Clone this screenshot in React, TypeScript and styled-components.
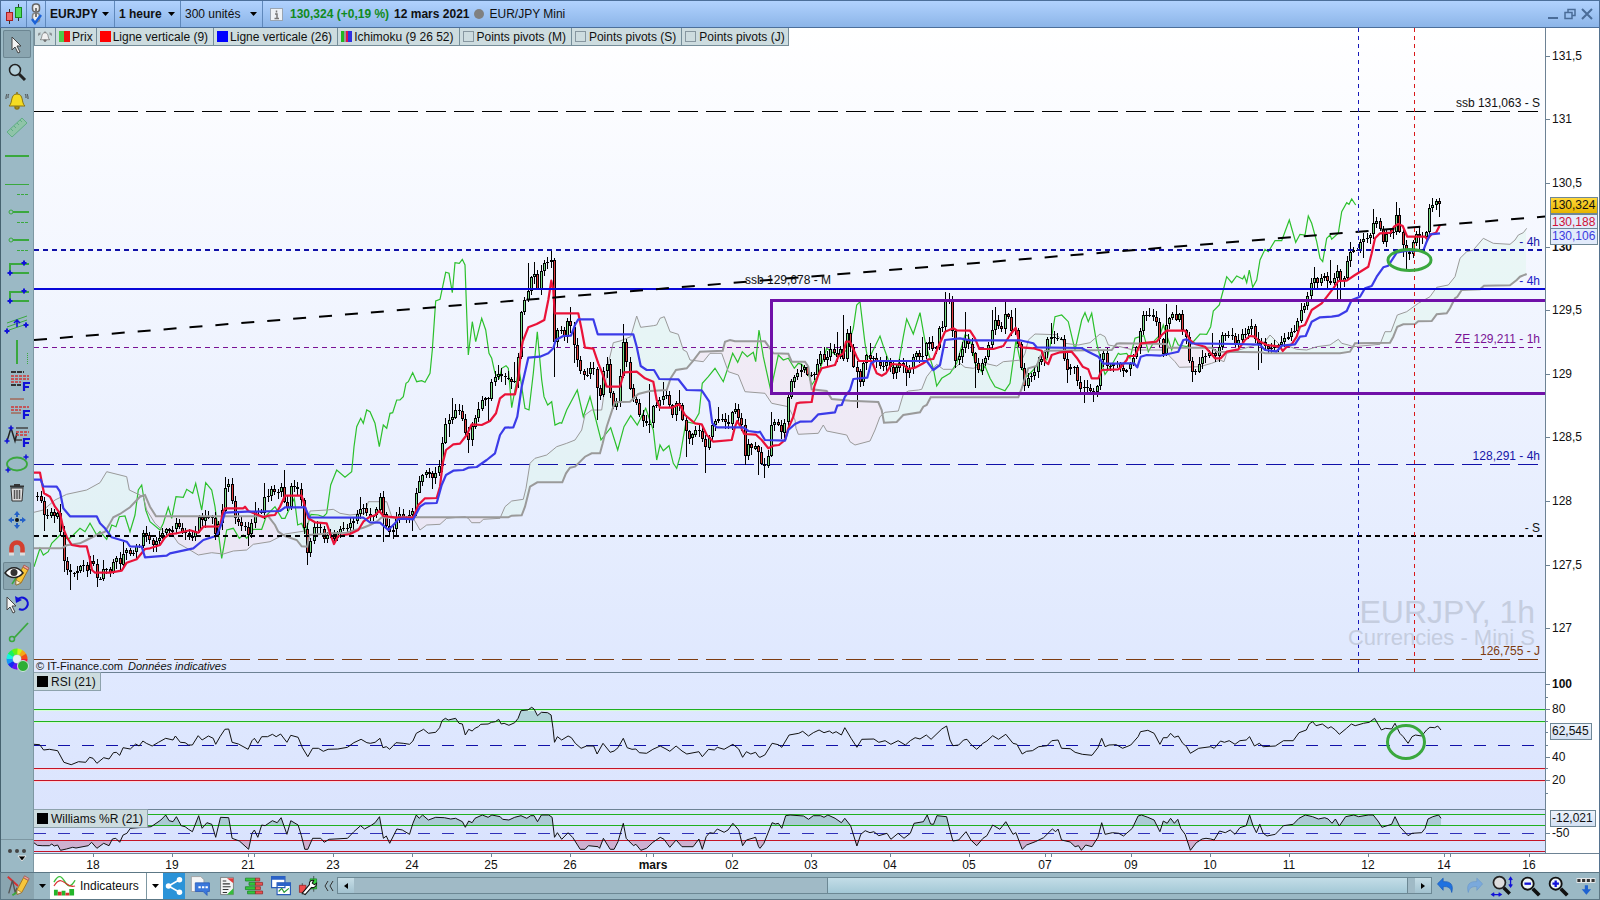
import React from 'react';
import styled, { createGlobalStyle, css } from 'styled-components';

/* ---------- series data ---------- */

type Pt = [number, number];

// Sections of a series are stored on a finer grid and mapped to plot units here.
const trace = (ox: number, oy: number, text: string, sx = 3): Pt[] =>
  text.trim().split(/\s+/).map((p) => {
    const [x, y] = p.split(',').map(Number);
    return [ox + x / sx, oy + y / 3] as Pt;
  });

const A: Pt = [-4, 372];
const B: Pt = [366, 212];
const C: Pt = [726, 232];
const D: Pt = [1086, 152];

const series = (a: string, b: string, c: string, d: string): Pt[] => [
  ...trace(A[0], A[1], a), ...trace(B[0], B[1], b), ...trace(C[0], C[1], c), ...trace(D[0], D[1], d),
];

const tenkan = series(
  '12,218 30,218 36,250 42,280 60,290 75,320 90,340 100,385 110,410 125,435 150,439 170,439 178,470 186,510 195,518 240,518 275,512 290,488 320,478 345,447 360,445 390,435 405,412 420,402 440,400 480,391 505,398 520,380 570,379 578,340 585,325 640,325 645,320 655,333 685,345 700,352 715,347 735,345 750,320 765,287 815,287 825,320 835,355 855,367 890,370 900,400 912,432 925,408 960,402 985,390 1000,365 1020,350 1035,346 1048,333 1060,348 1100,353',
  '10,833 40,833 55,795 75,775 110,774 120,740 128,670 138,630 160,613 180,611 200,585 215,553 245,555 270,543 288,520 300,475 315,463 345,463 355,420 362,340 368,305 385,262 410,252 433,240 445,180 454,122 460,150 464,220 535,220 545,270 555,323 580,326 595,370 607,400 620,440 660,440 672,397 710,395 735,415 760,425 770,480 780,503 815,503 838,493 855,525 885,550 905,553 920,585 940,605 995,600 1005,560 1012,543 1027,570 1033,582 1068,584 1085,600 1105,625 1120,617 1137,615 1155,600 1165,565 1180,530 1190,490',
  '120,428 155,426 163,380 175,345 185,325 225,315 235,290 250,280 258,245 270,245 290,290 297,303 335,303 350,340 365,347 378,340 395,312 430,315 445,327 465,323 490,310 505,298 520,297 535,260 555,215 580,205 590,211 630,212 645,235 658,267 700,267 730,258 750,225 767,203 780,255 785,262 820,265 845,272 855,305 865,312 875,285 900,277 935,275 950,293 968,320 985,328 995,355 1015,355 1025,330 1075,328',
  '0,565 20,540 25,528 45,528 62,490 110,485 125,465 140,452 195,452 210,480 225,492 255,500 272,520 285,535 302,535 320,515 355,508 375,480 390,468 405,470 415,482 440,495 480,500 488,513 500,500 515,493 530,470 540,440 555,435 575,390 605,370 640,325 655,303 680,302 705,285 745,260 755,220 765,175 780,160 812,158 822,140 835,132 848,138 862,170 915,170 922,178 935,162 948,158 960,135',
);

const kijun = series(
  '12,239 32,239 40,259 80,260 90,275 100,325 120,349 200,349 210,370 225,385 245,412 290,425 300,439 335,440 345,472 410,467 420,460 490,445 520,420 560,407 575,370 585,338 650,335 750,333 765,322 825,322 838,352 1000,353 1020,367 1050,368 1075,390 1095,370 1105,357',
  '10,836 40,838 60,800 75,790 110,789 125,735 138,705 160,692 190,690 205,683 230,681 260,660 285,640 300,585 315,563 340,562 352,530 365,440 385,353 420,350 445,340 460,325 467,300 490,288 513,287 525,255 535,238 580,238 593,283 700,283 710,320 722,378 740,390 762,390 778,417 835,418 860,450 905,451 928,485 937,550 950,562 1030,562 1045,573 1075,577',
  '0,515 15,540 75,542 85,510 105,492 120,485 155,484 175,463 225,457 232,437 245,435 255,410 270,390 280,357 322,353 333,310 345,303 500,303 520,330 540,315 555,240 600,235 630,241 780,241 820,250 830,262 965,264 985,275 1015,290 1030,311 1075,311',
  '0,550 42,550 52,562 62,530 80,525 120,527 175,515 190,480 200,478 215,490 350,492 420,494 435,510 470,514 485,497 525,493 540,470 557,468 575,425 600,412 635,410 655,407 680,393 695,360 720,350 735,325 755,318 770,290 790,262 805,257 830,218 860,212 910,212 920,185 930,163 960,160',
);

const spanB = series(
  '12,445 95,445 110,436 150,430 170,420 200,405 225,395 240,370 250,352 270,342 300,322 330,290 345,285 360,320 378,349 715,349 735,375 745,395 765,408 800,420 815,439 832,440 838,405 900,400 950,398 975,390 1000,383 1020,375 1040,365 1055,352 1100,353',
  '0,832 325,832 335,827 365,826 375,800 390,740 412,727 487,727 498,700 510,683 525,680 555,650 575,640 600,640 608,610 620,560 640,500 645,487 690,485 715,462 750,453 800,450 812,415 828,390 860,385 880,362 900,335 968,332 975,305 990,300 1005,304 1095,304 1110,325 1120,340 1165,341 1175,365 1195,365',
  '135,305 145,320 155,388 200,393 215,417 270,422 355,426 365,450 372,488 410,486 430,465 480,457 490,440 500,435 512,412 775,412 785,385 805,325 830,318 840,290 855,272 1055,270 1070,251',
  '0,490 140,492 145,503 275,503 290,515 425,517 435,520 660,520 690,515 705,490 810,488 820,470 832,440 850,433 885,432 895,424 935,423 950,403 980,400 990,385 1005,355 1012,350 1025,330 1080,328 1092,317 1170,316 1190,300 1200,290 1220,282',
);

const spanA = series(
  '12,337 40,330 75,300 110,283 170,270 210,248 230,215 290,230 298,270 340,290 350,330 375,370 400,393 430,408 445,430 480,450 505,465 545,458 580,462 610,453 650,450 670,433 720,425 765,402 830,392 840,333 890,330 910,328 930,340 960,345 1005,340 1015,305 1070,305 1085,350 1110,353',
  '10,833 40,835 60,870 80,855 120,853 140,835 195,830 205,835 215,848 240,848 250,838 300,835 315,800 335,783 370,778 378,745 390,670 405,655 440,645 470,620 500,610 525,600 545,570 555,525 575,510 605,510 615,440 625,370 640,308 660,303 692,290 710,228 722,262 760,257 770,255 780,235 793,230 810,275 835,283 850,330 860,335 870,360 910,365 930,340 965,340 985,395 1015,405 1035,455 1095,460 1115,490 1165,500 1185,540',
  '108,505 115,523 175,520 190,495 200,513 260,525 270,545 285,555 330,543 345,510 360,470 375,457 415,453 430,403 445,393 475,390 485,388 500,350 520,325 530,313 550,328 580,328 600,310 615,322 640,325 680,311 710,318 730,305 785,300 795,280 805,240 825,222 890,224 915,250 955,255 990,248 1005,235 1020,222 1035,230 1045,255 1075,260',
  '0,500 40,510 135,510 150,530 165,545 178,562 240,560 275,550 300,540 312,545 320,520 340,515 400,497 415,490 435,485 450,465 465,480 480,495 510,500 530,508 560,510 590,500 630,495 640,488 655,478 665,490 685,495 700,500 780,493 795,455 813,455 832,405 860,395 895,370 930,350 950,322 985,315 1005,290 1020,235 1040,215 1060,210 1090,175 1120,190 1170,193 1185,180 1195,165 1210,158 1220,145',
);

const chikou = series(
  '12,500 30,445 40,465 55,455 65,430 90,405 115,418 130,405 150,385 165,395 180,370 200,405 210,395 230,418 245,375 258,380 268,350 285,348 300,395 315,345 325,270 335,255 347,330 360,365 390,390 400,370 415,322 425,355 438,290 460,292 470,268 488,280 497,250 515,330 527,248 545,270 555,320 575,475 590,390 610,385 628,415 640,405 650,415 670,388 695,388 710,345 735,320 755,355 765,355 793,295 803,375 815,370 825,398 843,343 865,345 880,350 890,340 902,255 920,210 945,232 965,215 972,140 980,80 992,55 1000,70 1010,30 1020,35 1035,70 1048,140 1060,75 1070,85 1080,40 1088,38 1100,0',
  '0,480 10,470 18,430 25,425 38,398 50,425 65,422 75,427 90,400 97,330 107,183 120,178 137,97 147,100 157,158 165,68 178,70 187,58 195,75 200,220 205,345 217,245 227,305 245,235 257,270 267,340 275,355 285,400 298,415 305,385 318,377 325,385 335,503 357,385 365,440 375,505 387,510 400,400 412,275 425,420 432,470 443,495 455,485 465,555 480,548 485,550 500,510 532,450 550,530 570,470 603,600 632,563 653,630 672,560 692,527 712,555 737,505 760,570 770,660 780,615 790,632 807,617 820,670 830,685 840,650 858,545 880,550 897,520 907,430 925,410 945,385 970,425 985,380 998,340 1013,367 1027,335 1042,350 1060,337 1067,365 1077,270 1090,350 1113,455 1120,415 1135,345 1150,360 1165,355 1183,385 1195,370',
  '125,313 145,340 155,375 165,360 175,345 200,265 235,290 260,270 280,205 290,135 300,125 315,250 322,290 330,290 360,228 372,265 385,300 400,320 405,325 415,315 430,230 440,177 460,222 480,158 497,255 520,325 530,378 545,355 570,340 590,310 615,225 625,228 635,255 645,310 665,335 675,318 690,355 705,380 735,392 750,370 768,240 785,325 800,350 820,330 840,300 860,300 870,260 885,170 905,165 925,185 945,270 965,180 975,158 985,185 995,160 1010,250 1025,310 1035,343 1055,315 1075,280',
  '0,523 20,520 30,535 45,475 60,470 72,467 85,515 105,480 120,465 130,435 155,510 165,475 175,495 200,500 220,485 240,462 260,463 272,440 280,393 298,375 310,330 320,290 335,308 350,288 368,297 373,287 380,308 388,270 398,322 410,300 420,240 435,208 445,215 465,182 485,182 508,120 527,187 540,163 555,165 565,108 575,130 590,185 600,235 608,245 620,175 630,165 635,178 655,160 665,95 680,68 687,73 695,57 707,75',
);

const closes = series(
  '22,290 32,298 42,345 52,352 62,340 72,350 82,340 92,400 101,487 110,508 121,520 130,520 140,515 148,500 160,497 170,510 180,485 190,490 200,538 210,536 222,505 240,520 250,483 262,475 272,500 280,455 290,452 303,465 315,440 328,438 338,402 350,405 362,435 372,435 390,410 405,385 420,395 430,392 438,365 450,395 465,400 485,418 495,400 505,350 515,365 530,345 545,350 557,410 570,345 578,325 585,258 600,250 608,350 625,372 650,385 657,420 668,345 680,320 690,362 700,285 715,295 725,262 740,290 750,250 762,300 775,330 783,250 805,270 815,315 825,425 835,475 845,400 855,378 870,385 882,420 895,400 912,415 930,385 950,385 968,365 985,335 995,315 1010,345 1035,350 1048,285 1060,355 1075,395 1085,400 1100,345 1115,345 1130,355 1142,345',
  '40,815 50,735 62,715 78,690 95,712 110,700 122,660 130,560 142,540 155,535 165,510 178,512 190,545 202,615 212,565 230,517 245,475 265,480 275,425 295,400 320,420 345,425 355,340 365,190 375,180 387,135 400,92 415,155 425,70 440,60 455,65 463,345 475,240 490,300 503,240 515,270 525,340 543,400 558,412 573,378 585,390 595,500 605,425 615,365 625,375 632,500 645,510 655,440 663,380 672,270 682,410 695,470 710,490 722,545 735,550 748,550 760,490 772,495 785,465 800,460 815,535 830,480 840,500 850,555 862,595 875,585 890,565 905,590 912,630 925,590 935,560 950,530 970,545 985,555 1000,500 1015,530 1025,560 1032,660 1042,615 1055,625 1070,610 1080,670 1092,685 1105,640 1115,540 1135,555 1148,590 1158,500 1170,430 1185,405 1195,400',
  '120,338 130,320 145,350 155,345 165,345 178,280 195,305 210,270 230,290 240,265 250,305 258,210 270,260 280,320 290,330 296,390 305,325 315,283 330,295 345,290 355,320 370,320 385,300 395,348 415,310 430,320 440,345 455,310 462,265 475,290 490,285 500,230 512,262 525,270 535,205 548,200 555,125 568,120 578,230 585,300 600,285 610,250 620,228 630,265 642,305 655,335 668,305 680,280 690,235 700,175 712,190 722,220 735,160 748,170 757,240 765,200 775,260 782,320 792,380 805,350 820,340 835,300 850,290 862,240 875,230 888,245 900,230 912,300 925,335 940,315 950,360 962,385 975,380 990,390 1000,395 1015,370 1025,240 1035,310 1050,320 1075,310',
  '5,580 20,565 35,548 45,520 55,485 63,410 80,405 95,410 108,425 118,480 128,520 138,430 155,400 165,420 178,400 188,460 200,480 205,530 212,580 225,575 240,540 260,525 275,515 290,530 300,470 320,465 335,465 348,500 360,465 380,455 392,430 405,480 415,490 428,480 440,510 455,505 470,500 490,480 510,460 525,455 540,395 555,380 567,330 578,290 592,305 610,290 635,310 650,270 665,320 680,245 695,205 710,212 725,180 745,178 755,140 768,120 780,150 790,190 805,150 815,170 828,105 845,185 855,205 865,240 875,190 888,165 905,175 918,155 925,95 935,70 942,72 949,55 958,76',
);

// Turning points whose wick runs well past the candle body.
const extremes = series(
  '40,392 92,313 101,515 121,570 200,560 222,480 280,425 345,378 438,355 585,230 603,235 657,438 675,305 700,250 763,210 793,240 835,495 990,290 1048,280 1060,425 1148,390',
  '38,872 58,760 97,748 145,592 160,475 205,640 265,545 295,375 345,365 387,70 402,65 454,30 463,412 513,200 525,370 595,540 615,350 672,253 748,433 748,578 790,425 835,450 860,650 917,700 960,500 1005,488 1030,675 1077,705 1097,715 1115,515',
  '15,655 232,215 250,165 293,443 325,250 440,378 487,230 560,97 568,98 590,325 620,155 650,383 697,150 707,140 737,125 767,145 790,392 875,190 925,370 973,428 1005,425',
  '5,590 90,385 118,500 142,373 172,375 220,607 272,460 390,420 397,418 410,570 427,548 440,520 578,262 635,240 648,365 665,367 695,185 733,235 763,88 832,65 850,230 862,270 900,210 963,110',
);

const at = (pts: Pt[], x: number): number => {
  if (x <= pts[0][0]) return pts[0][1];
  for (let i = 1; i < pts.length; i++) {
    if (pts[i][0] >= x) {
      const [x0, y0] = pts[i - 1];
      const [x1, y1] = pts[i];
      return x1 === x0 ? y1 : y0 + ((y1 - y0) * (x - x0)) / (x1 - x0);
    }
  }
  return pts[pts.length - 1][1];
};

const toPath = (pts: Pt[]) => pts.map((p, i) => `${i ? 'L' : 'M'}${p[0].toFixed(1)} ${p[1].toFixed(1)}`).join('');

const noise = (n: number) => {
  const v = Math.sin(n * 127.1 + 31.7) * 43758.5453;
  return v - Math.floor(v);
};

interface Candle { x: number; open: number; close: number; high: number; low: number }

const STEP = 3.29;
const candles: Candle[] = [];
{
  let prev = at(closes, 3) - 1;
  for (let i = 0; i <= 426; i++) {
    const x = 3.4 + i * STEP;
    const close = at(closes, x) + (noise(i) - 0.5) * 3;
    const top = Math.min(prev, close);
    const bottom = Math.max(prev, close);
    candles.push({ x: Math.round(x), open: prev, close, high: top - 1 - noise(i + 900) * 6, low: bottom + 1 + noise(i + 400) * 6 });
    prev = close;
  }
  extremes.forEach(([x, y]) => {
    const c = candles[Math.max(0, Math.min(candles.length - 1, Math.round((x - 3.4) / STEP)))];
    if (y < (c.open + c.close) / 2) c.high = y;
    else c.low = y;
  });
}

// The cloud is split in runs, one for each side that leads.
const cloud: { bull: boolean; d: string }[] = [];
{
  let run: number[] = [];
  let bull = true;
  const flush = () => {
    if (run.length > 1) {
      const upper = run.map((x) => [x, at(spanA, x)] as Pt);
      const lower = run.slice().reverse().map((x) => [x, at(spanB, x)] as Pt);
      cloud.push({ bull, d: toPath([...upper, ...lower]) + 'Z' });
    }
    run = [];
  };
  for (let x = 0; x <= 1492; x += 1) {
    const b = at(spanA, x) <= at(spanB, x);
    if (b !== bull) { flush(); bull = b; }
    run.push(x);
  }
  flush();
}

const RX = 2.063;
const rsi: Pt[] = [
  ...trace(-4, 8, '8,193 20,194 28,210 40,208 57,212 70,247 85,254 100,245 115,247 123,232 130,235 138,250 152,233 163,237 172,218 178,217 185,226 192,203 207,207 218,192 225,198 233,183 240,190 252,198 265,187 280,175 295,180 300,168 310,187 320,188 327,195 335,195 347,167 355,180 368,168 378,175 383,193 392,170 402,148 410,147 417,187 430,192 450,208 458,182 463,175 470,190 478,170 490,170 500,163 508,170 517,162 530,187 538,166 553,172 562,203 573,230 583,205 595,205 605,214 615,208 635,207 655,202 668,188 683,178 695,188 702,190 712,187 722,175 728,203 735,200 742,208 755,188 770,190 783,193 790,183 797,160 812,148 822,160 837,157 845,143 850,122 857,115 863,120 878,115 885,130 892,132 898,165 905,148 912,153 918,145 925,140 930,133 945,132 952,127 960,125 967,118 972,132 978,130 988,136 1000,128 1007,115 1013,92 1027,90 1035,82 1040,87 1047,107 1055,97 1068,98 1075,105 1079,145 1082,187 1088,170 1097,180 1110,168 1117,173 1125,190 1137,205 1148,198 1163,198 1170,222 1182,190 1197,217 1205,213 1213,203 1224,175 1232,203 1242,208 1250,207 1257,218 1272,220 1285,208 1300,198 1312,207 1320,214 1333,198 1345,213 1355,222 1380,215 1387,230 1400,208 1412,210 1418,202 1432,208 1450,193 1462,207 1470,232 1478,215 1487,222 1497,217 1503,230', RX),
  ...trace(726, 8, '0,232 10,225 25,190 38,194 45,202 60,165 80,160 88,154 100,168 110,158 122,150 132,158 143,153 150,160 157,155 168,165 175,143 188,175 200,202 210,178 235,177 245,187 258,182 270,193 285,182 300,195 310,182 320,173 330,177 343,165 353,178 375,147 385,138 392,180 398,197 410,195 420,180 427,178 435,193 447,208 460,190 468,183 480,167 492,178 507,163 522,190 530,193 541,222 550,214 562,212 575,200 592,197 602,182 615,180 622,205 640,206 650,217 665,223 685,226 697,203 705,175 712,200 720,195 735,194 748,205 765,195 780,170 785,155 800,151 813,160 825,193 832,173 840,173 847,160 855,172 863,168 872,190 880,200 888,220 905,205 930,200 937,205 950,183 958,187 968,182 980,193 990,182 1003,180 1010,170 1020,198 1030,190 1038,200 1063,198 1080,182 1100,182 1112,158 1127,150 1133,132 1140,125 1147,137 1160,132 1172,145 1178,140 1187,150 1195,163 1210,145 1220,132 1228,137 1245,130 1257,127 1268,115 1282,150 1290,145 1303,147 1310,130 1320,160 1327,170 1337,190 1345,170 1352,165 1365,168 1375,150 1382,142 1392,143 1398,138 1405,150', RX),
];
const williams: Pt[] = [
  ...trace(-4, -129, '8,488 15,496 25,497 40,497 45,492 50,498 57,495 63,511 75,507 88,502 95,504 120,497 127,487 138,505 152,490 163,497 170,477 177,475 185,487 192,465 200,460 207,445 250,440 262,428 270,420 280,405 287,422 295,425 302,410 312,437 320,440 327,448 335,455 348,407 355,445 365,428 375,433 383,472 393,412 410,413 417,475 432,483 451,508 458,460 463,450 470,472 478,435 485,437 500,422 510,428 518,413 530,463 538,422 553,435 560,467 567,508 573,508 583,475 600,475 607,487 617,478 655,475 668,455 682,437 690,447 705,435 712,428 721,410 729,475 735,468 742,490 757,447 768,450 783,463 790,430 797,405 803,415 810,405 822,420 837,412 855,413 868,417 878,415 892,425 898,442 905,423 912,428 918,415 933,405 945,412 953,405 970,410 975,418 988,420 1000,412 1013,407 1025,415 1033,407 1040,407 1047,425 1055,405 1070,405 1077,412 1082,472 1088,458 1097,478 1110,458 1120,473 1135,508 1145,508 1152,497 1172,500 1175,505 1183,475 1197,508 1205,508 1213,485 1224,430 1230,475 1245,497 1250,493 1260,511 1272,505 1285,487 1300,472 1308,478 1320,502 1333,480 1345,500 1368,500 1380,477 1387,508 1395,470 1402,458 1410,460 1418,447 1432,457 1440,450 1450,430 1462,450 1470,497 1478,480 1497,472 1503,500', RX),
  ...trace(726, -129, '0,505 8,490 25,428 32,432 38,430 45,445 53,407 62,405 90,408 100,418 110,407 125,407 132,412 140,405 155,415 168,428 175,415 187,437 200,498 208,463 217,452 227,458 235,455 245,467 262,460 270,478 285,460 297,475 310,460 318,430 337,425 345,405 352,432 358,433 365,407 385,410 390,440 398,483 410,480 425,455 435,480 447,497 460,475 468,467 480,435 495,448 507,425 522,463 528,458 541,508 550,495 568,485 585,473 603,447 610,455 615,447 622,480 640,486 650,500 657,497 663,511 672,495 685,500 697,472 705,428 712,463 727,458 740,460 750,468 768,445 780,408 787,405 800,412 813,420 825,455 832,423 840,430 847,415 855,430 862,418 868,445 877,463 888,511 900,488 912,477 920,475 930,477 937,480 948,453 960,458 970,450 980,463 990,443 1003,437 1010,405 1017,437 1024,458 1031,433 1038,460 1046,468 1063,463 1080,437 1100,433 1112,415 1125,405 1140,410 1152,417 1165,413 1172,417 1180,430 1187,417 1195,438 1208,410 1225,405 1235,410 1255,405 1265,405 1275,423 1283,442 1303,433 1310,410 1320,440 1337,467 1345,460 1365,458 1372,445 1378,417 1388,410 1400,405 1405,415', RX),
];

const area = (pts: Pt[], level: number) =>
  `${toPath(pts)}L${pts[pts.length - 1][0]} ${level}L${pts[0][0]} ${level}Z`;

/* ---------- styled parts ---------- */

const Global = createGlobalStyle`
  * { box-sizing: border-box; }
  body { margin: 0; background: #fff; }
  button, select, input { font: inherit; color: inherit; }
`;

const Window = styled.div`
  display: flex;
  flex-direction: column;
  min-height: 100vh;
  font: 12px/16px 'Liberation Sans', Arial, sans-serif;
  color: #101010;
  background: #fff;
`;

const TitleBar = styled.header`
  display: flex;
  align-items: stretch;
  height: 28px;
  border: 1px solid #4c6f9a;
  background: linear-gradient(#b1d2fe, #8cb5e8);
`;

const TitleIcon = styled.button<{ $w: number }>`
  display: flex;
  align-items: center;
  justify-content: center;
  width: ${(p) => p.$w}px;
  padding: 0;
  border: 0;
  border-right: 1px solid #5f88bb;
  background: none;
`;

const Picker = styled.label<{ $w: number; $bold?: boolean }>`
  display: flex;
  align-items: center;
  justify-content: space-between;
  width: ${(p) => p.$w}px;
  padding: 0 5px 0 4px;
  border-right: 1px solid #5f88bb;
  font-weight: ${(p) => (p.$bold ? 700 : 400)};
  select {
    appearance: none;
    padding: 0;
    border: 0;
    background: none;
  }
`;

const Quote = styled.div`
  display: flex;
  flex: 1;
  align-items: center;
  gap: 5px;
  padding-left: 7px;
  strong { white-space: nowrap; }
`;
const Change = styled.strong`
  padding-left: 2px;
  color: #108a20;
`;
const Dot = styled.span`
  width: 10px;
  height: 10px;
  border-radius: 50%;
  background: #808080;
`;

const WindowButtons = styled.div`
  display: flex;
  align-items: center;
  gap: 5px;
  padding-right: 6px;
  button { display: flex; padding: 0; border: 0; background: none; }
`;

const Body = styled.div`
  display: flex;
  flex: 1;
`;

const ToolColumn = styled.nav`
  display: flex;
  flex-direction: column;
  align-items: center;
  width: 34px;
  padding: 2px 0 0;
  border-left: 1px solid #46626f;
  border-right: 1px solid #7d97a2;
  background: #9bb9c5;
`;

const Tool = styled.button<{ $active?: boolean }>`
  width: 28px;
  height: 28px;
  padding: 0;
  border: 0;
  border-radius: 2px;
  background: none;
  svg { display: block; }
  ${(p) => p.$active && css`
    background: #8aa5b0;
    box-shadow: inset 0 0 0 1px #6c8692;
  `}
`;

const MoreTool = styled.button`
  width: 100%;
  height: 33px;
  margin-top: auto;
  padding: 0;
  border: 0;
  border-top: 1px solid #7d97a2;
  background: none;
`;

const Charts = styled.main`
  display: flex;
  flex: 1;
  flex-direction: column;
  min-width: 0;
  border-right: 1px solid #55728f;
`;

const Panel = styled.section<{ $grow: number; $from: string; $to: string }>`
  display: flex;
  flex: ${(p) => p.$grow} 1 0;
  min-height: ${(p) => Math.min(p.$grow, 120)}px;
  background: linear-gradient(${(p) => p.$from}, ${(p) => p.$to});
`;

const Plot = styled.div`
  position: relative;
  flex: 1;
  min-width: 0;
`;

const Drawing = styled.svg`
  position: absolute;
  inset: 0;
  width: 100%;
  height: 100%;
`;

const Scale = styled.div`
  position: relative;
  width: 54px;
  border-left: 1px solid #6d8294;
  background: #fff;
`;

const ScaleText = styled.span<{ $y: number; $bold?: boolean }>`
  position: absolute;
  left: 6px;
  top: calc(${(p) => p.$y}% - 8px);
  font-weight: ${(p) => (p.$bold ? 700 : 400)};
  &::before {
    content: '';
    position: absolute;
    left: -6px;
    top: 8px;
    width: 4px;
    height: 1px;
    background: #6d8294;
  }
`;

const MinorTick = styled.i<{ $y: number }>`
  position: absolute;
  left: 0;
  top: ${(p) => p.$y}%;
  width: 2px;
  height: 1px;
  background: #6d8294;
`;

const PriceTag = styled.span<{ $y: number; $kind?: 'last' | 'red' | 'blue' }>`
  position: absolute;
  left: 4px;
  top: calc(${(p) => p.$y}% - 8px);
  padding: 0 2px 0 1px;
  border: 1px solid #6f8796;
  line-height: 15px;
  color: ${(p) => (p.$kind === 'red' ? '#d01238' : p.$kind === 'blue' ? '#3b3be0' : '#101010')};
  background: ${(p) => (p.$kind === 'last' ? 'linear-gradient(#ffd83a, #e6b400)' : p.$kind ? '#e2ebfb' : 'linear-gradient(#eef4fc, #d3e0f2)')};
`;

const Legend = styled.div`
  position: relative;
  display: inline-flex;
  height: 18px;
  border-bottom: 1px solid #758d99;
  border-left: 1px solid #758d99;
`;

const Chip = styled.label<{ $tight?: boolean }>`
  display: flex;
  align-items: center;
  gap: 2px;
  padding: 0 ${(p) => (p.$tight ? 3 : 5)}px 0 3px;
  border-right: 1px solid #758d99;
  white-space: nowrap;
  background: #cddcdf;
`;

const Swatch = styled.span<{ $bg: string }>`
  width: 11px;
  height: 11px;
  background: ${(p) => p.$bg};
`;

const Tick = styled.input`
  appearance: none;
  width: 11px;
  height: 11px;
  margin: 0 1px 0 0;
  border: 1px solid #8797a0;
`;

const PanelName = styled.h2`
  position: relative;
  display: inline-flex;
  align-items: center;
  gap: 3px;
  height: 19px;
  margin: 0;
  padding: 0 4px 0 3px;
  border: 1px solid #8da2ac;
  border-left: 0;
  font-size: 12px;
  font-weight: 400;
  vertical-align: top;
  background: #cddcdf;
`;

const LineLabel = styled.span<{ $y: number; $x?: number; $color?: string }>`
  position: absolute;
  top: calc(${(p) => p.$y}% - 8px);
  ${(p) => (p.$x === undefined ? 'right: 5px;' : `left: ${p.$x}%;`)}
  color: ${(p) => p.$color ?? '#101010'};
  white-space: nowrap;
`;

const Watermark = styled.div`
  position: absolute;
  right: 10px;
  bottom: 22px;
  text-align: right;
  color: #c5cddf;
  font-size: 22px;
  line-height: 24px;
  b { display: block; font-size: 32px; font-weight: 400; line-height: 28px; }
`;

const Credit = styled.div`
  position: absolute;
  left: 2px;
  bottom: -2px;
  font-size: 11px;
  em { margin-left: 2px; }
`;

const DateRow = styled.div`
  display: flex;
  height: 19px;
  border-top: 1px solid #6d8294;
  background: #fff;
`;
const DateTrack = styled.div`
  position: relative;
  flex: 1;
  margin-right: 54px;
`;
const DateText = styled.span<{ $x: number; $bold?: boolean }>`
  position: absolute;
  left: calc(${(p) => p.$x}% - 20px);
  top: 3px;
  width: 40px;
  text-align: center;
  font-weight: ${(p) => (p.$bold ? 700 : 400)};
`;
const DateTick = styled.i<{ $x: number }>`
  position: absolute;
  left: ${(p) => p.$x}%;
  top: 0;
  width: 1px;
  height: 3px;
  background: #6d8294;
`;

const BottomBar = styled.footer`
  display: flex;
  align-items: stretch;
  height: 28px;
  border: 1px solid #5c7785;
  background: #9bb9c5;
`;

const BarButton = styled.button<{ $w: number; $bg?: string }>`
  display: flex;
  flex: none;
  align-items: center;
  justify-content: center;
  gap: 4px;
  width: ${(p) => p.$w}px;
  padding: 0;
  border: 0;
  background: ${(p) => p.$bg ?? 'none'};
`;

const LabelledButton = styled(BarButton)`
  justify-content: flex-start;
  padding-left: 3px;
  border-right: 1px solid #7d97a2;
`;

const Scroller = styled.div`
  display: flex;
  flex: 1;
  margin: 4px 0 5px;
  border: 1px solid #6c8894;
  background: #a0bac6;
  button {
    display: flex;
    align-items: center;
    justify-content: center;
    width: 16px;
    padding: 0;
    border: 0;
    background: linear-gradient(#c6dde6, #a2c2d0);
  }
`;
const ScrollGap = styled.div<{ $grow: number }>`flex: ${(p) => p.$grow};`;
const ScrollThumb = styled.div`
  flex: 580;
  border: solid #6c8894;
  border-width: 0 1px;
  background: linear-gradient(#c3dde7, #a3c8d6);
`;

/* ---------- icons ---------- */

const Ico = ({ s = 28, children }: { s?: number; children: React.ReactNode }) => (
  <svg width={s} height={s} viewBox="0 0 28 28" fill="none" aria-hidden="true">{children}</svg>
);

const Caret = () => (
  <svg width="7" height="4" viewBox="0 0 7 4" aria-hidden="true"><path d="M0 0h7L3.500 4z" fill="#000" /></svg>
);

const G = '#3aa83e';
const N = '#1111d8';
const plus = (x: number, y: number) => `M${x - 2.5} ${y}h5M${x} ${y - 2.5}v5`;

const Arrow = ({ x = 9, y = 7 }: { x?: number; y?: number }) => (
  <path transform={`translate(${x} ${y})`} d="M0 0v13l3-3 3 6 2-1-3-6h4z" fill="#f4f4f4" stroke="#444" strokeWidth="1" />
);
const Pencil = () => (
  <>
    <path d="M13 18 20 5l5 3-7 13-5 2z" fill="#f7c63c" stroke="#a8751b" />
    <path d="m20 5 5 3 1-2-5-3z" fill="#f3a39a" stroke="#a86055" />
    <path d="m13 18 5 3-5 2z" fill="#fff0cf" stroke="#8b6a3a" strokeWidth=".7" />
  </>
);
const FMark = () => (
  <path d="M21 25v-8h6M21 21h5" stroke={N} strokeWidth="2.200" />
);
const Bell = ({ fill, line }: { fill: string; line: string }) => (
  <>
    <path d="M6 20c4-3 1-12 8-12s4 9 8 12z" fill={fill} stroke={line} />
    <path d="M12 21a2 2 0 0 0 4 0zM14 8V6" fill={fill} stroke={line} strokeWidth="1.500" />
    <path d="M4 8c-1 2-1 3-1 5M6 8c-1 1-1 2-1 4M24 8c1 2 1 3 1 5M22 8c1 1 1 2 1 4" stroke="#444" />
  </>
);

const tools: { name: string; active?: boolean; art: React.ReactNode }[] = [
  { name: 'Curseur', active: true, art: <Arrow /> },
  { name: 'Zoom', art: <><circle cx="12" cy="12" r="5.500" fill="#b5d0da" stroke="#222" strokeWidth="1.500" /><path d="m16 16 6 6" stroke="#222" strokeWidth="3" /></> },
  { name: 'Alerte', art: <Bell fill="#f5dc22" line="#8c7410" /> },
  { name: 'Règle', art: <><path d="m4 18 15-14 5 5L9 23z" fill="#8fc4a8" stroke="#5fae84" /><path d="m8 15 2 2m1-5 2 2m1-5 2 2m1-5 2 2" stroke="#5fae84" /></> },
  { name: 'Ligne épaisse', art: <path d="M2 14h24" stroke={G} strokeWidth="2" /> },
  { name: 'Ligne', art: <path d="M2 14.500h24M14 24.500h3m1 0h3m1 0h3" stroke={G} /> },
  { name: 'Demi-droite', art: <><path d="M10 14h16" stroke={G} strokeWidth="2" /><circle cx="8" cy="14" r="2" stroke={G} /><path d="M14 24.500h3m1 0h3m1 0h3" stroke={G} /></> },
  { name: 'Segment', art: <><path d="M10 14h16" stroke={G} strokeWidth="2" /><circle cx="8" cy="14" r="2" stroke={G} /><path d="M14 24.500h3m1 0h3m1 0h3" stroke={G} /></> },
  { name: 'Rectangle', art: <><path d="M26 10H7v9h19" stroke={G} strokeWidth="2" /><path d={plus(21, 9) + plus(7, 19)} stroke={N} strokeWidth="2" /></> },
  { name: 'Rectangle étendu', art: <><path d="M26 10H7v9h19" stroke={G} strokeWidth="2" /><path d={plus(21, 9) + plus(7, 19)} stroke={N} strokeWidth="2" /></> },
  { name: 'Canal', art: <><path d="m4 13 20-7M4 17l20-7M6 20l18-6" stroke={G} /><path d={plus(4, 21) + plus(23, 15)} stroke={N} strokeWidth="2" /><path d="M14 17v-6m-3 2 3-3 3 3" stroke={N} strokeWidth="1.500" /></> },
  { name: 'Ligne verticale', art: <><path d="M14 2v24" stroke={G} strokeWidth="2" /><path d="M24.500 15v11" stroke={G} strokeDasharray="1 1" /></> },
  { name: 'Fibonacci', art: <><path d="M8 6h13M8 19h10" stroke="#333" strokeWidth="2" strokeDasharray="5 1" /><path d="M8 10h18M8 13h18M8 16h10" stroke="#d03535" strokeWidth="1.500" strokeDasharray="3 1" /><FMark /></> },
  { name: 'Extension Fibonacci', art: <><path d="M7 5h14M8 19h10" stroke="#a36a5a" strokeWidth="1.500" /><path d="M8 13h18M8 16h10" stroke="#d03535" strokeWidth="1.500" strokeDasharray="3 1" /><FMark /></> },
  { name: 'Projection Fibonacci', art: <><path d="m4 19 4-13 4 13 2-8" stroke="#222" strokeWidth="1.500" /><path d={plus(8, 6) + plus(4, 19)} stroke={N} strokeWidth="1.500" /><path d="M13 6h12M13 18h6" stroke="#444" strokeWidth="1.500" /><path d="M13 10h13M13 13h11" stroke="#d03535" strokeWidth="1.500" strokeDasharray="3 1" /><FMark /></> },
  { name: 'Ellipse', art: <><ellipse cx="14" cy="14" rx="10" ry="6.500" stroke={G} strokeWidth="1.800" /><path d={plus(23, 7) + plus(5, 20)} stroke={N} strokeWidth="1.500" /></> },
  { name: 'Supprimer', art: <><path d="m8 10 1 13h10l1-13z" fill="#ddd" stroke="#333" /><path d="M7 8.500h14M11 7h6" stroke="#333" strokeWidth="2" /><path d="M11.500 12v9m2.500-9v9m2.500-9v9" stroke="#555" strokeWidth="1.500" /></> },
  { name: 'Déplacer', art: <><path d="m14 5 3 4h-6zM14 23l3-4h-6zM5 14l4-3v6zM23 14l-4-3v6z" fill="#2360c8" /><path d="M14 8v3m0 6v3M8 14h3m6 0h3" stroke="#2360c8" strokeWidth="2" /><circle cx="14" cy="14" r="2" fill="#111" /></> },
  { name: 'Aimant', art: <><path d="M8.500 21v-7a5.500 5.500 0 0 1 11 0v7" stroke="#d3402f" strokeWidth="4.500" /><path d="M6 20h5M17 20h5" stroke="#ddd" strokeWidth="3" /></> },
  { name: 'Afficher les dessins', active: true, art: <><path d="m9 22 4-6 2 7" stroke={G} strokeWidth="1.500" /><Pencil /><path d="M2 11c5-7 13-7 18 0-5 6-13 6-18 0z" fill="#fff" stroke="#222" strokeWidth="1.500" /><circle cx="11" cy="10.500" r="3.500" fill="#333" /></> },
  { name: 'Rétablir curseur', art: <><Arrow x={4} y={7} /><path d="M14 10a6 6 0 1 1 2 9" stroke={N} strokeWidth="2.200" /><path d="m12 6 1 7 6-3z" fill={N} /></> },
  { name: 'Tracer un segment', art: <><path d="M11 20 25 5" stroke={G} strokeWidth="1.800" /><circle cx="9" cy="21" r="2.500" stroke={G} strokeWidth="1.500" /></> },
];

const wheel = ['#c8e024', '#8bdc28', '#27c56a', '#20bfe0', '#246ce8', '#3d28d2', '#246ce8', '#20a0f0', '#20c8e0', '#27c56a', '#ffb01c', '#ffe623'];
const wheelHues = [70, 40, 15, 350, 320, 295, 260, 235, 205, 175, 140, 100];
const Wheel = () => (
  <Ico>
    {wheel.map((_, i) => {
      const p = (a: number) => `${14 + 7.5 * Math.sin(a)} ${13 - 7.5 * Math.cos(a)}`;
      return <path key={i} d={`M${p((i * Math.PI) / 6)}A7.5 7.5 0 0 1 ${p(((i + 1.1) * Math.PI) / 6)}`} stroke={`hsl(${wheelHues[i]} 90% 52%)`} strokeWidth="6" />;
    })}
    <circle cx="14" cy="13" r="4" fill="#e8f0f4" />
    <circle cx="20" cy="20" r="5.500" fill="#2fae35" stroke="#cfe3e3" />
  </Ico>
);

const Lens = ({ sign }: { sign: string }) => (
  <Ico s={26}>
    <circle cx="11.500" cy="11.500" r="6.500" fill="#eef4f6" stroke="#111" strokeWidth="2" />
    <path d="m17 17 7 7" stroke="#111" strokeWidth="4" />
    <path d={sign} stroke={N} strokeWidth="2.500" />
  </Ico>
);

/* ---------- page ---------- */

const H = 644;
const py = (y: number) => (y / H) * 100;
const px = (x: number) => (x / 1511) * 100;

const prices: [string, number, boolean?][] = [
  ['131,5', 28], ['131', 91], ['130,5', 155], ['130', 219, true], ['129,5', 282], ['129', 346],
  ['128,5', 409], ['128', 473], ['127,5', 537], ['127', 600],
];
const dates: [string, number, boolean?][] = [
  ['18', 59], ['19', 138], ['21', 214], ['23', 299], ['24', 378], ['25', 457], ['26', 536], ['mars', 619, true],
  ['02', 698], ['03', 777], ['04', 856], ['05', 935], ['07', 1011], ['09', 1097], ['10', 1176], ['11', 1255],
  ['12', 1334], ['14', 1410], ['16', 1495],
];

const PriceDrawing = () => (
  <Drawing viewBox="0 0 1511 644" preserveAspectRatio="none" fill="none" aria-label="Cours EURJPY">
    {cloud.map((c, i) => <path key={i} d={c.d} fill={c.bull ? '#dcf6ea' : '#f3e0ea'} fillOpacity=".42" />)}
    <path d="M0 83.500H1507" stroke="#000" strokeDasharray="20 8" />
    <path d="M0 436.500H1507" stroke="#1010a8" strokeDasharray="20 8" />
    <path d="M0 631.500H1507" stroke="#7d3c10" strokeDasharray="20 8" />
    <path d="M0 319.500H1507" stroke="#7a1295" strokeDasharray="5 4" />
    <path d={toPath(chikou)} stroke="#2cc02c" strokeWidth="1.200" />
    <path d={toPath(spanA)} stroke="#9a9a9a" />
    {candles.map((c, i) => {
      const top = Math.round(Math.min(c.open, c.close));
      const h = Math.max(1, Math.round(Math.abs(c.open - c.close)));
      return (
        <g key={i}>
          <path d={`M${c.x + 0.5} ${Math.round(c.high)}V${Math.round(c.low)}`} stroke="#000" />
          <rect x={c.x - 1} y={top} width="3" height={h} fill="#000" />
          {h > 2 && <rect x={c.x} y={top + 1} width="1" height={h - 2} fill={c.close < c.open ? '#7fe08a' : '#e04040'} />}
        </g>
      );
    })}
    <path d={toPath(spanB)} stroke="#9a9a9a" strokeWidth="2" />
    <path d={toPath(tenkan)} stroke="#ea1238" strokeWidth="2.200" strokeLinejoin="round" />
    <path d={toPath(kijun)} stroke="#3b3be8" strokeWidth="2.200" strokeLinejoin="round" />
    <path d="M0 222H1511" stroke="#1010a8" strokeWidth="2" strokeDasharray="5 4" />
    <path d="M0 261H1511" stroke="#0808d8" strokeWidth="2" />
    <path d="M0 508H1511" stroke="#000" strokeWidth="2" strokeDasharray="5 4" />
    <path d="M1511 272.500H737.500V365.500H1511" stroke="#7010a8" strokeWidth="3" />
    <path d="M0 312 1511 188.500" stroke="#000" strokeWidth="2" strokeDasharray="13 13" />
    <path d="M1324.500 0V644" stroke="#1818b8" strokeDasharray="4 4" />
    <path d="M1380.500 0V644" stroke="#d81818" strokeDasharray="4 4" />
    <ellipse cx="1375.500" cy="232" rx="21.500" ry="10.500" stroke={G} strokeWidth="3" />
  </Drawing>
);

const RsiDrawing = () => (
  <Drawing viewBox="0 0 1511 137" preserveAspectRatio="none" fill="none" aria-label="RSI">
    <clipPath id="rsi-high"><rect width="1511" height="49" /></clipPath>
    <path d="M0 .5H1511" stroke="#6d8294" />
    <path d={area(rsi, 49)} fill="#2f9a6a" fillOpacity=".25" clipPath="url(#rsi-high)" />
    <path d="M0 38.500H1511M0 50.500H1511" stroke="#d2ffd2" />
    <path d="M0 97.500H1511M0 109.500H1511" stroke="#ffd6dc" />
    <path d="M0 37.500H1511M0 49.500H1511" stroke="#20b020" />
    <path d="M0 96.500H1511M0 108.500H1511" stroke="#c41426" />
    <path d="M0 73.500H1507" stroke="#1010a8" strokeDasharray="12 12" />
    <path d={toPath(rsi)} stroke="#111" />
    <ellipse cx="1372" cy="70" rx="18.500" ry="16.500" stroke={G} strokeWidth="3" />
  </Drawing>
);

const WilliamsDrawing = () => (
  <Drawing viewBox="0 0 1511 44" preserveAspectRatio="none" fill="none" aria-label="Williams">
    <clipPath id="wr-high"><rect width="1511" height="16" /></clipPath>
    <clipPath id="wr-low"><rect y="32" width="1511" height="12" /></clipPath>
    <path d="M0 .5H1511" stroke="#6d8294" />
    <path d={area(williams, 16)} fill="#2f8a6a" fillOpacity=".28" clipPath="url(#wr-high)" />
    <path d={area(williams, 32)} fill="#b03060" fillOpacity=".28" clipPath="url(#wr-low)" />
    <path d="M0 5.500H1511M0 16.500H1511" stroke="#20b020" />
    <path d="M0 31.500H1511M0 42.500H1511" stroke="#c41426" />
    <path d="M0 24.500H1507" stroke="#3030b8" strokeDasharray="12 12" />
    <path d={toPath(williams)} stroke="#111" />
  </Drawing>
);

export default function App() {
  return (
    <Window>
      <Global />
      <TitleBar>
        <TitleIcon $w={26} aria-label="Graphique">
          <svg width="20" height="22" viewBox="0 0 20 22"><path d="M5.500 6v15M14.500 1v17" stroke="#333" /><rect x="2.500" y="9.500" width="6" height="8" fill="#f06a6a" stroke="#a82020" /><rect x="11.500" y="4.500" width="6" height="10" fill="#4fdc58" stroke="#188a20" /></svg>
        </TitleIcon>
        <TitleIcon $w={19} aria-label="Lier">
          <svg width="14" height="22" viewBox="0 0 14 22" fill="none"><rect x="3.500" y="1" width="7" height="8" rx="3" fill="#eee" stroke="#666" strokeWidth="1.500" /><rect x="3.500" y="10" width="7" height="9" rx="3" fill="#eee" stroke="#888" strokeWidth="1.500" /><path d="M7 5v9" stroke="#777" strokeWidth="2" /><path d="m3 16 3 4 6-8" stroke="#1b62d8" strokeWidth="2.500" /></svg>
        </TitleIcon>
        <Picker $w={69} $bold><select aria-label="Instrument"><option>EURJPY</option></select><Caret /></Picker>
        <Picker $w={66} $bold><select aria-label="Période"><option>1 heure</option></select><Caret /></Picker>
        <Picker $w={82}><select aria-label="Unités"><option>300 unités</option></select><Caret /></Picker>
        <Quote>
          <svg width="13" height="13" viewBox="0 0 13 13"><rect x=".5" y=".5" width="12" height="12" fill="#eef2f6" stroke="#9aa5b2" /><path d="M6.500 2.500v2M5 6h2v4.500M4.500 10.500h4.500" stroke="#777" strokeWidth="1.500" fill="none" /></svg>
          <Change>130,324 (+0,19 %)</Change>
          <strong>12 mars 2021</strong>
          <Dot />
          <span>EUR/JPY Mini</span>
        </Quote>
        <WindowButtons>
          <button aria-label="Réduire"><svg width="12" height="12" viewBox="0 0 12 12"><path d="M1 10h10" stroke="#4a6c98" strokeWidth="2" /></svg></button>
          <button aria-label="Restaurer"><svg width="12" height="12" viewBox="0 0 12 12" fill="none"><path d="M4 4V1.500h7v6H8M1 4.500h7v6H1z" stroke="#4a6c98" strokeWidth="1.500" /></svg></button>
          <button aria-label="Fermer"><svg width="12" height="12" viewBox="0 0 12 12"><path d="m1 1 10 10M11 1 1 11" stroke="#4a6c98" strokeWidth="2" /></svg></button>
        </WindowButtons>
      </TitleBar>

      <Body>
        <ToolColumn aria-label="Outils de dessin">
          {tools.map((t) => <Tool key={t.name} $active={t.active} aria-label={t.name}><Ico>{t.art}</Ico></Tool>)}
          <Tool aria-label="Couleurs"><Wheel /></Tool>
          <MoreTool aria-label="Plus d’outils">
            <svg width="22" height="20" viewBox="0 0 22 20"><g fill="#444"><circle cx="4" cy="7" r="2" /><circle cx="11" cy="7" r="2" /><circle cx="18" cy="7" r="2" /></g><path d="M12 12h8l-4 5z" fill="#000" stroke="#fff" strokeWidth=".8" /></svg>
          </MoreTool>
        </ToolColumn>

        <Charts>
          <Panel $grow={644} $from="#ffffff" $to="#dfe8fe">
            <Plot>
              <PriceDrawing />
              <Watermark><b>EURJPY, 1h</b>Currencies - Mini S</Watermark>
              <LineLabel $y={py(75)}>ssb 131,063 - S</LineLabel>
              <LineLabel $y={py(214)} $color="#1515a8">- 4h</LineLabel>
              <LineLabel $y={py(253)} $color="#2020c8">- 4h</LineLabel>
              <LineLabel $y={py(252)} $x={px(711)}>ssb 129,678 - M</LineLabel>
              <LineLabel $y={py(311)} $color="#7a1295">ZE 129,211 - 1h</LineLabel>
              <LineLabel $y={py(428)} $color="#1515a8">128,291 - 4h</LineLabel>
              <LineLabel $y={py(500)}>- S</LineLabel>
              <LineLabel $y={py(623)} $color="#7d3c10">126,755 - J</LineLabel>
              <Credit>© IT-Finance.com <em>Données indicatives</em></Credit>
              <Legend>
                <Chip $tight><svg width="14" height="15" viewBox="2 5 24 19" fill="none"><Bell fill="#f0f0f0" line="#555" /></svg></Chip>
                <Chip $tight><Swatch $bg="linear-gradient(90deg,#4ccb4c 50%,#f01010 50%)" />Prix</Chip>
                <Chip><Swatch $bg="#ff0000" />Ligne verticale (9)</Chip>
                <Chip><Swatch $bg="#0000ff" />Ligne verticale (26)</Chip>
                <Chip><Swatch $bg="linear-gradient(90deg,#20b820 30%,#999 30% 45%,#e01050 45% 65%,#3030e0 65%)" />Ichimoku (9 26 52)</Chip>
                {['M', 'S', 'J'].map((k) => <Chip key={k} $tight={k === 'J'}><Tick type="checkbox" />Points pivots ({k})</Chip>)}
              </Legend>
            </Plot>
            <Scale>
              {prices.map(([t, y, b]) => <ScaleText key={t} $y={py(y)} $bold={b}>{t}</ScaleText>)}
              <PriceTag $y={py(177)} $kind="last">130,324</PriceTag>
              <PriceTag $y={py(194)} $kind="red">130,188</PriceTag>
              <PriceTag $y={py(208)} $kind="blue">130,106</PriceTag>
            </Scale>
          </Panel>

          <Panel $grow={137} $from="#e0e9ff" $to="#dbe4fd">
            <Plot>
              <RsiDrawing />
              <PanelName><Swatch $bg="#000" />RSI (21)</PanelName>
            </Plot>
            <Scale>
              <ScaleText $y={9} $bold>100</ScaleText>
              <ScaleText $y={27}>80</ScaleText>
              <ScaleText $y={62}>40</ScaleText>
              <ScaleText $y={79}>20</ScaleText>
              {[18, 36, 44, 53, 70, 88].map((y) => <MinorTick key={y} $y={y} />)}
              <PriceTag $y={43}>62,545</PriceTag>
            </Scale>
          </Panel>

          <Panel $grow={44} $from="#dce5fe" $to="#d8e2fd">
            <Plot>
              <WilliamsDrawing />
              <PanelName><Swatch $bg="#000" />Williams %R (21)</PanelName>
            </Plot>
            <Scale>
              <ScaleText $y={55}>-50</ScaleText>
              <PriceTag $y={20}>-12,021</PriceTag>
            </Scale>
          </Panel>

          <DateRow>
            <DateTrack>
              {dates.map(([t, x, b]) => <React.Fragment key={t}><DateTick $x={px(x)} /><DateText $x={px(x)} $bold={b}>{t}</DateText></React.Fragment>)}
              {[220, 612, 1017, 1416].map((x) => <DateTick key={x} $x={px(x)} />)}
            </DateTrack>
          </DateRow>
        </Charts>
      </Body>

      <BottomBar>
        <BarButton $w={33} $bg="#8aa5b0" aria-label="Dessiner"><Ico s={26}><path d="M3 4 14 14" stroke="#d83030" strokeWidth="2" /><path d="m4 22 4-14 3 13 2-5" stroke="#555" strokeWidth="1.500" /><path d="m8 24 6-4" stroke={G} strokeWidth="2" /><Pencil /></Ico></BarButton>
        <BarButton $w={16} aria-label="Options de dessin"><Caret /></BarButton>
        <LabelledButton $w={97} $bg="#fff">
          <svg width="23" height="22" viewBox="0 0 24 22" fill="none"><path d="M1 7C6-2 9 1 12 6s6 8 11-1" stroke="#3cbf3c" strokeWidth="1.500" /><path d="M1 11c5-8 8-6 12-3s6 4 10 3" stroke="#d83030" strokeWidth="1.200" /><path d="M1 15h4v6H1zM9 16h4v5H9zM17 14h5v7h-5z" fill="#25b52b" /><path d="M5 17h4v4H5zM13 18h4v3h-4z" fill="#d83030" /></svg>
          Indicateurs
        </LabelledButton>
        <BarButton $w={16} $bg="#fff" aria-label="Choisir un indicateur"><Caret /></BarButton>
        <BarButton $w={22} $bg="#2b93d8" aria-label="Partager"><Ico s={22}><path d="M21 6 7 14l14 8" stroke="#fff" strokeWidth="2" /><g fill="#fff"><circle cx="21" cy="6" r="3.500" /><circle cx="7" cy="14" r="3.500" /><circle cx="21" cy="22" r="3.500" /></g></Ico></BarButton>
        <BarButton $w={29} aria-label="Commentaires"><Ico s={22}><path d="M3 2h12l4 4v15H3z" fill="#f5f5f5" stroke="#999" /><path d="M8 10h18v11h-3v5l-5-5H8z" fill="#3b78dc" stroke="#2a5cb8" /><path d="M12 15.500h3m1.500 0h3m1.500 0h3" stroke="#fff" strokeWidth="2.500" /></Ico></BarButton>
        <BarButton $w={26} aria-label="Carnet"><Ico s={20}><path d="M5 2h18v24H5z" fill="#f4f4f4" stroke="#666" /><path d="M14 3h9v7z" fill="#e03a3a" /><path d="M23 17v9h-9z" fill="#36bd3b" /><path d="M8 7h5M8 11h10M8 15h11M8 19h8M8 23h6" stroke="#333" strokeWidth="1.500" /></Ico></BarButton>
        <BarButton $w={27} aria-label="Profondeur"><Ico s={20}><path d="M2 3h14v4H2zM7 9h9v4H7zM2 15h14v4H2zM5 21h11v4H5z" fill="#32c83a" stroke="#197d20" /><path d="M16 3h6v4h-6zM16 9h10v4H16zM16 15h7v4h-7zM16 21h10v4H16z" fill="#e85252" stroke="#962222" /></Ico></BarButton>
        <BarButton $w={27} aria-label="Copier la fenêtre"><Ico s={22}><path d="M2 2h17v14H2zM9 10h17v15H9z" fill="#fff" stroke="#2a5cb8" strokeWidth="1.500" /><path d="M2 2h17v4H2zM9 10h17v4H9z" fill="#2a62c8" /><path d="m11 21 4-4 3 5 6-5" stroke="#2a9a35" strokeWidth="1.500" /></Ico></BarButton>
        <BarButton $w={27} aria-label="Réglages"><Ico s={20}><path d="M6 10v16M22 0v22" stroke="#333" /><path d="M2 13h9v10H2z" fill="#f04a4a" stroke="#961c1c" /><path d="M17 4h9v14h-9z" fill="#36d23d" stroke="#197d20" /><path d="m6 24 10-12a5 5 0 0 1 6-6l-2 4 3 2 3-2c0 5-4 7-7 6L10 26z" fill="#fff" stroke="#111" strokeWidth="1.500" /></Ico></BarButton>
        <BarButton $w={16} aria-label="Masquer"><svg width="10" height="10" viewBox="0 0 10 10" fill="none"><path d="M4 0 1 5l3 5M9 0 6 5l3 5" stroke="#333" /></svg></BarButton>
        <Scroller role="scrollbar" aria-label="Historique" aria-valuenow={90}>
          <button aria-label="Reculer"><svg width="4" height="6" viewBox="0 0 4 6"><path d="M4 0v6L0 3z" /></svg></button>
          <ScrollGap $grow={473} />
          <ScrollThumb />
          <ScrollGap $grow={7} />
          <button aria-label="Avancer"><svg width="4" height="6" viewBox="0 0 4 6"><path d="M0 0v6l4-3z" /></svg></button>
        </Scroller>
        <BarButton $w={28} aria-label="Annuler"><Ico s={20}><path d="M10 3v5c10-1 15 4 12 15-1-6-5-9-12-8v5L2 11z" fill="#1f72e0" stroke="#1658b8" /></Ico></BarButton>
        <BarButton $w={28} aria-label="Rétablir"><Ico s={20}><path d="M18 3v5C8 7 3 12 6 23c1-6 5-9 12-8v5l8-9z" fill="#7aa9dc" stroke="#6a98cc" /></Ico></BarButton>
        <BarButton $w={28} aria-label="Ajuster"><Ico s={24}><circle cx="11" cy="10" r="7" fill="#ddd" stroke="#222" strokeWidth="2" /><path d="m16 16 7 7" stroke="#111" strokeWidth="4" /><path d="M24 5v9m-2-7 2-3 2 3m-4 5 2 3 2-3M3 24h9m-7-2-3 2 3 2m5-4 3 2-3 2" stroke={N} strokeWidth="1.500" /></Ico></BarButton>
        <BarButton $w={28} aria-label="Dézoomer"><Lens sign="M8 11.500h7" /></BarButton>
        <BarButton $w={28} aria-label="Zoomer"><Lens sign="M8 11.500h7M11.500 8v7" /></BarButton>
        <BarButton $w={27} aria-label="Dernière valeur"><Ico s={22}><path d="M2 4h24v6H2z" fill="#eee" /><path d="M3 7h22" stroke="#333" strokeWidth="4" strokeDasharray="4 2" /><path d="M12.500 13h4v5h4l-6 7-6-7h4z" fill="#1f62d0" /></Ico></BarButton>
      </BottomBar>
    </Window>
  );
}
